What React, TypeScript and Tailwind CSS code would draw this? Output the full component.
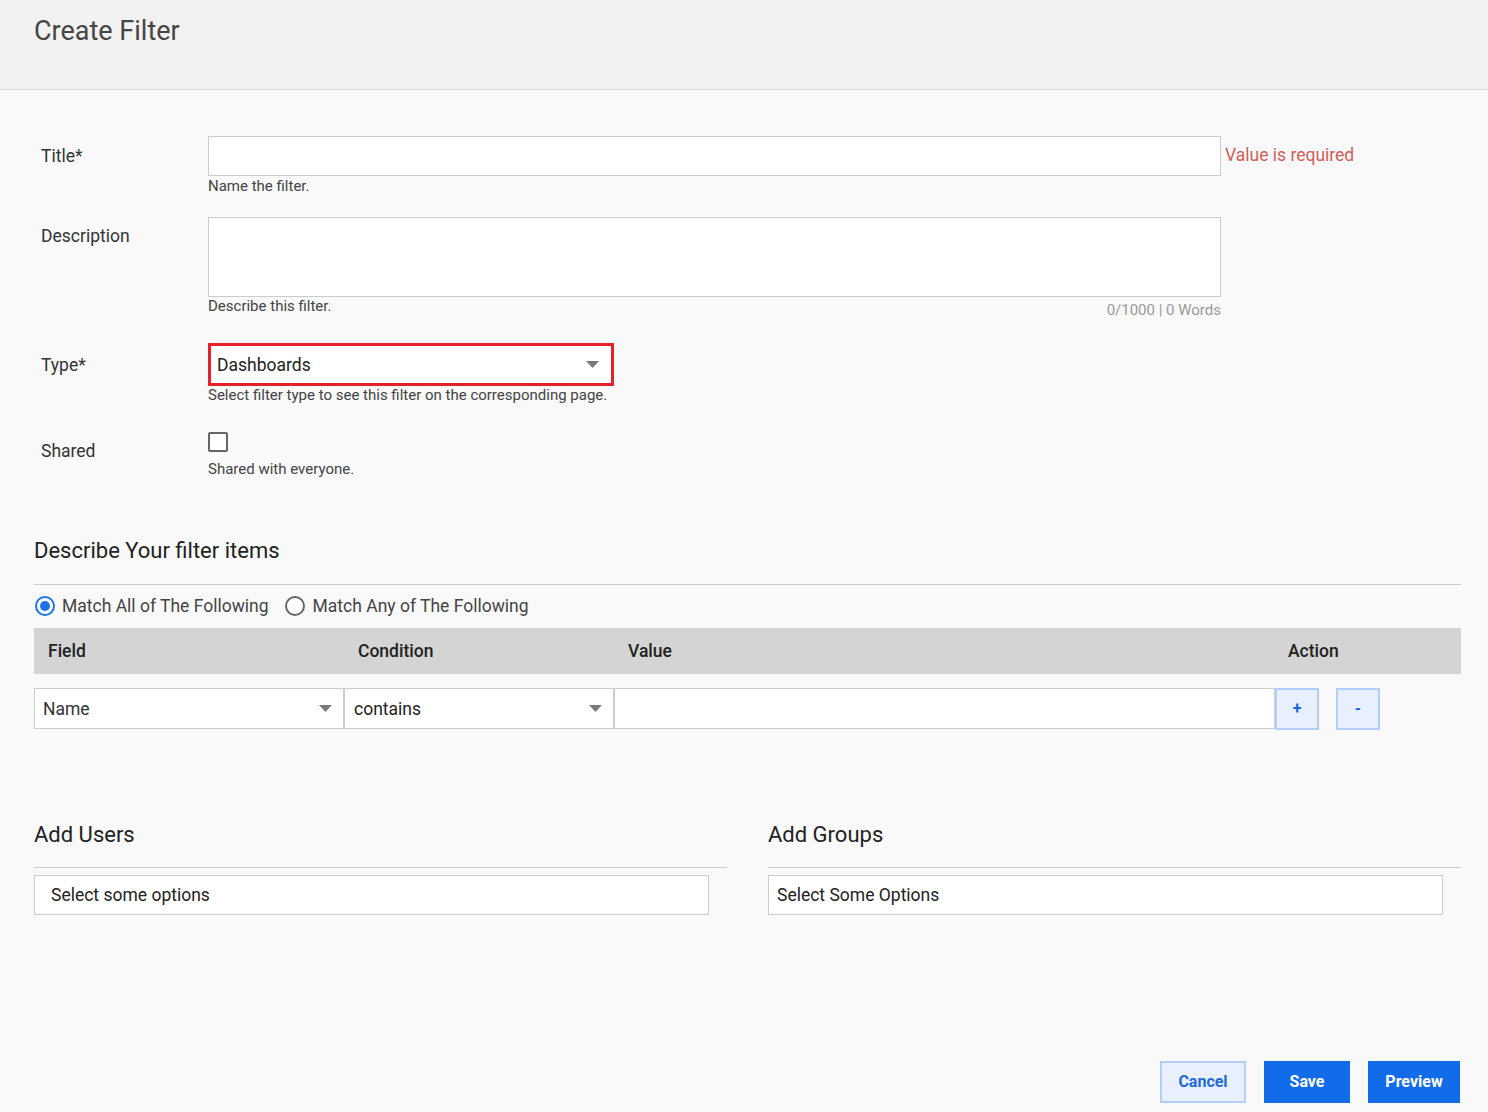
import React from "react";

const Caret = () => (
  <svg width="13" height="7" viewBox="0 0 13 7" className="shrink-0">
    <path d="M0 0 L13 0 L6.5 7 Z" fill="#7a7a7a" />
  </svg>
);

export default function App() {
  return (
    <div
      className="min-h-[1112px] w-[1488px] bg-[#f9f9f9] text-[#333]"
      style={{ fontFamily: "Roboto, 'Liberation Sans', sans-serif" }}
    >
      <header className="h-[90px] bg-[#f2f2f2] border-b border-[#d9d9d9] pl-[34px] pt-[15px]">
        <h1 className="text-[27px] leading-[33px] font-normal text-[#454545]">Create Filter</h1>
      </header>

      <div className="pl-[34px] pr-[27px]">
        {/* Title */}
        <div className="mt-[46px] flex pl-[7px]">
          <div className="w-[167px] pt-[10px] text-[17.5px] leading-[21px]">Title*</div>
          <div className="w-[1013px]">
            <div className="h-[40px] border border-[#cccccc] bg-white" />
            <div className="text-[15px] leading-[20px] text-[#444]">Name the filter.</div>
          </div>
          <div className="ml-[4px] pt-[8px] text-[17.5px] leading-[23px] text-[#cf5e58]">Value is required</div>
        </div>

        {/* Description */}
        <div className="mt-[21px] flex pl-[7px]">
          <div className="w-[167px] pt-[9px] text-[17.5px] leading-[21px]">Description</div>
          <div className="w-[1013px]">
            <div className="h-[80px] border border-[#cccccc] bg-white" />
            <div className="flex justify-between">
              <div className="text-[15px] leading-[18px] text-[#444]">Describe this filter.</div>
              <div className="pt-[4px] text-[15px] leading-[18px] text-[#9a9a9a]">0/1000 | 0 Words</div>
            </div>
          </div>
        </div>

        {/* Type */}
        <div className="mt-[24px] flex pl-[7px]">
          <div className="w-[167px] pt-[12px] text-[17.5px] leading-[21px]">Type*</div>
          <div>
            <div className="flex h-[43px] w-[406px] items-center justify-between border-[3px] border-[#e8202a] bg-white pl-[6px] pr-[12px]">
              <span className="pt-[2px] text-[17.5px] text-[#222]">Dashboards</span>
              <Caret />
            </div>
            <div className="text-[15px] leading-[18px] text-[#444]">
              Select filter type to see this filter on the corresponding page.
            </div>
          </div>
        </div>

        {/* Shared */}
        <div className="mt-[28px] flex pl-[7px]">
          <div className="w-[167px] pt-[9px] text-[17.5px] leading-[21px]">Shared</div>
          <div>
            <div className="h-[20px] w-[20px] rounded-[2px] border-2 border-[#666] bg-white" />
            <div className="mt-[8px] text-[15px] leading-[18px] text-[#444]">Shared with everyone.</div>
          </div>
        </div>

        {/* Describe items */}
        <h2 className="mt-[59px] text-[22px] leading-[28px] font-normal text-[#222]">Describe Your filter items</h2>
        <div className="mt-[19px] border-t border-[#cccccc]" />
        <div className="mt-[10px] flex items-center text-[17.5px] leading-[22px] text-[#444]">
          <span className="ml-[1px] mr-[7px] flex h-[20px] w-[20px] items-center justify-center rounded-full border-2 border-[#1a73e8] bg-white">
            <span className="h-[10px] w-[10px] rounded-full bg-[#1a73e8]" />
          </span>
          <span>Match All of The Following</span>
          <span className="ml-[16px] mr-[8px] h-[20px] w-[20px] rounded-full border-2 border-[#666] bg-white" />
          <span>Match Any of The Following</span>
        </div>

        <div className="mt-[11px] flex h-[46px] items-center bg-[#d4d4d4] text-[17.5px] font-medium text-[#222]">
          <div className="w-[310px] pl-[14px]">Field</div>
          <div className="w-[270px] pl-[14px]">Condition</div>
          <div className="w-[661px] pl-[14px]">Value</div>
          <div className="pl-[13px]">Action</div>
        </div>

        <div className="mt-[14px] flex items-start">
          <div className="flex h-[41px] w-[310px] items-center justify-between border border-[#cccccc] bg-white pl-[8px] pr-[11px]">
            <span className="pt-[2px] text-[17.5px] text-[#333]">Name</span>
            <Caret />
          </div>
          <div className="flex h-[41px] w-[270px] items-center justify-between border border-[#cccccc] bg-white pl-[9px] pr-[11px]">
            <span className="pt-[2px] text-[17.5px] text-[#222]">contains</span>
            <Caret />
          </div>
          <div className="h-[41px] w-[661px] border border-[#cccccc] bg-white" />
          <button className="flex h-[42px] w-[44px] items-center justify-center border-2 border-[#b3cff9] bg-[#e8f0fe] text-[16px] font-bold text-[#1a66d8]">
            +
          </button>
          <button className="ml-[17px] flex h-[42px] w-[44px] items-center justify-center border-2 border-[#b3cff9] bg-[#e8f0fe] text-[16px] font-bold text-[#1a66d8]">
            -
          </button>
        </div>

        {/* Users / Groups */}
        <div className="mt-[91px] flex gap-[41px]">
          <div className="w-[693px]">
            <h2 className="text-[22px] leading-[28px] font-normal text-[#222]">Add Users</h2>
            <div className="mt-[18px] border-t border-[#cccccc]" />
            <div className="mt-[7px] flex h-[40px] w-[675px] items-center border border-[#cccccc] bg-white pl-[16px] text-[17.5px] text-[#222]">
              Select some options
            </div>
          </div>
          <div className="w-[693px]">
            <h2 className="text-[22px] leading-[28px] font-normal text-[#222]">Add Groups</h2>
            <div className="mt-[18px] border-t border-[#cccccc]" />
            <div className="mt-[7px] flex h-[40px] w-[675px] items-center border border-[#cccccc] bg-white pl-[8px] text-[17.5px] text-[#222]">
              Select Some Options
            </div>
          </div>
        </div>

        <div className="mt-[146px] flex justify-end gap-[18px] pr-[1px]">
          <button className="h-[42px] w-[86px] border-2 border-[#b3cff9] bg-[#e8f0fe] text-[16px] font-bold text-[#1f69d9]">
            Cancel
          </button>
          <button className="h-[42px] w-[86px] bg-[#126be8] text-[16px] font-bold text-white">Save</button>
          <button className="h-[42px] w-[92px] bg-[#126be8] text-[16px] font-bold text-white">Preview</button>
        </div>
      </div>
    </div>
  );
}
